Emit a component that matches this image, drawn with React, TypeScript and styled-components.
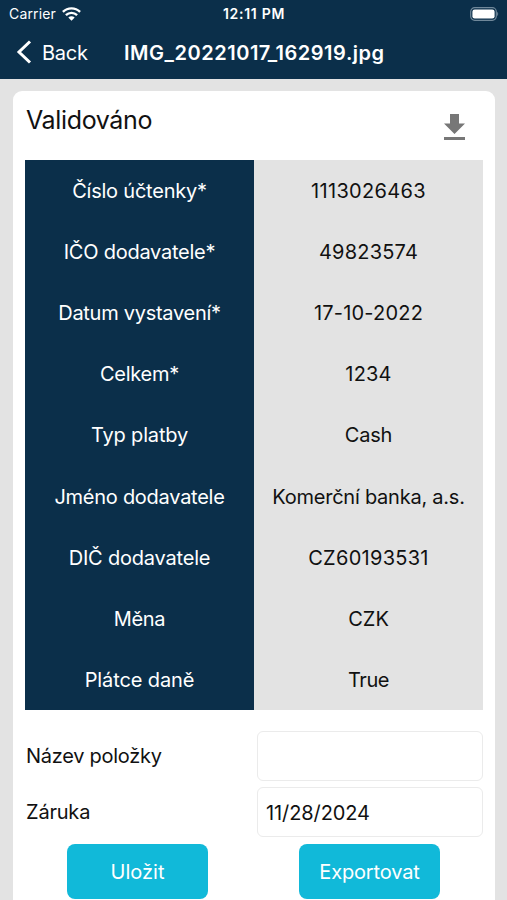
import React from "react";
import styled, { createGlobalStyle } from "styled-components";

const Global = createGlobalStyle`
  *{box-sizing:border-box}
  body{margin:0;background:#e3e3e3;font-family:Inter,"Liberation Sans",sans-serif;color:#111;overflow:hidden}
`;
const Screen = styled.main`width:507px;height:900px;overflow:hidden;background:#e3e3e3;`;
const Header = styled.header`height:79px;background:#0b2f4a;color:#fff;`;
const Status = styled.div`height:28px;display:grid;grid-template-columns:1fr auto 1fr;align-items:center;padding:0 8px 0 9px;`;
const Carrier = styled.div`display:flex;align-items:center;gap:6px;`;
const Battery = styled.div`display:flex;justify-content:flex-end;`;
const Nav = styled.nav`height:49px;display:flex;align-items:center;padding-left:16px;`;
const Back = styled.div`display:flex;align-items:center;gap:10px;width:108px;`;
const Card = styled.section`margin:12px 12px 0 13px;height:820px;border-radius:9px;background:#fff;padding:0 12px;`;
const CardHead = styled.div`height:69px;display:flex;justify-content:space-between;padding:13px 16px 0 1px;`;
const CardTitle = styled.div`padding-top:1px;`;
const Table = styled.div`height:550px;display:grid;grid-template-columns:229px 1fr;grid-template-rows:repeat(9,1fr);background:linear-gradient(90deg,#0b2f4a 229px,#e3e3e3 229px);`;
const Cell = styled.div<{ $light?: boolean }>`display:flex;align-items:center;justify-content:center;padding-top:1px;color:${p => (p.$light ? "#fff" : "#111")};`;
const Form = styled.div`padding-top:21px;display:grid;gap:6px;`;
const Field = styled.label`display:grid;grid-template-columns:231px 1fr;align-items:center;padding-left:1px;`;
const Input = styled.div`height:50px;border:1px solid #ebebeb;border-radius:6px;display:flex;align-items:center;padding:1px 0 0 8px;`;
const Actions = styled.div`display:flex;gap:91px;padding:7px 0 0 42px;`;
const Button = styled.button`width:141px;height:55px;border:0;border-radius:8px;background:#11b9d9;display:flex;align-items:center;justify-content:center;color:#fff;padding:0;font-family:inherit;`;
const Text = styled.span<{ $size?: number; $weight?: number; $track?: number }>`
  display:block;white-space:nowrap;line-height:1.2;
  font-size:${p => p.$size ?? 20}px;
  font-weight:${p => p.$weight ?? 400};
  letter-spacing:${p => p.$track ?? 0}px;
`;

type Row = { label: string; value: string; labelTrack: number; valueTrack: number };
const rows: Row[] = [
  { label: "Číslo účtenky*", value: "1113026463", labelTrack: -0.22, valueTrack: 0.33 },
  { label: "IČO dodavatele*", value: "49823574", labelTrack: -0.25, valueTrack: 0.2 },
  { label: "Datum vystavení*", value: "17-10-2022", labelTrack: -0.28, valueTrack: 0.2 },
  { label: "Celkem*", value: "1234", labelTrack: -0.25, valueTrack: 0.2 },
  { label: "Typ platby", value: "Cash", labelTrack: -0.15, valueTrack: -0.2 },
  { label: "Jméno dodavatele", value: "Komerční banka, a.s.", labelTrack: -0.26, valueTrack: -0.24 },
  { label: "DIČ dodavatele", value: "CZ60193531", labelTrack: -0.2, valueTrack: 0.28 },
  { label: "Měna", value: "CZK", labelTrack: -0.3, valueTrack: 0 },
  { label: "Plátce daně", value: "True", labelTrack: -0.12, valueTrack: -0.5 },
];

const WifiIcon = () => (
  <svg width="19" height="14" viewBox="0 0 19 14" fill="none" stroke="#fff" strokeWidth="2.4">
    <path d="M.9 4.9C5.8.2 13.2.2 18.1 4.9M3.9 8.2c3.2-3.1 8-3.1 11.2 0" />
    <path d="M6.3 10.6c1.9-1.7 4.5-1.7 6.4 0L9.5 13.8z" fill="#fff" stroke="none" />
  </svg>
);
const BatteryIcon = () => (
  <svg width="29" height="14" viewBox="0 0 29 14">
    <rect x=".7" y=".7" width="25.6" height="12.6" rx="4" fill="none" stroke="#70889a" strokeWidth="1.2" />
    <rect x="2.4" y="2.4" width="22.2" height="9.2" rx="2.3" fill="#fff" />
    <path d="M27.2 4.8q2 2.2 0 4.4z" fill="#70889a" />
  </svg>
);
const BackIcon = () => (
  <svg width="16" height="25" viewBox="0 0 16 25">
    <path d="M14 1.5 3 12 14 22.5" fill="none" stroke="#fff" strokeWidth="3" />
  </svg>
);
const DownloadIcon = () => (
  <svg width="24" height="44" viewBox="0 0 24 44">
    <path d="M7 10h9v9.5h6L11.5 30 1 19.5h6zM1 33h21v3H1z" fill="#777" />
  </svg>
);

export default function App() {
  return (
    <Screen>
      <Global />
      <Header>
        <Status>
          <Carrier><Text $size={14} $track={0.16}>Carrier</Text><WifiIcon /></Carrier>
          <Text $size={14} $weight={600} $track={0.72}>12:11 PM</Text>
          <Battery><BatteryIcon /></Battery>
        </Status>
        <Nav>
          <Back><BackIcon /><Text $track={-0.25}>Back</Text></Back>
          <Text $weight={600} $track={0.53}>IMG_20221017_162919.jpg</Text>
        </Nav>
      </Header>
      <Card>
        <CardHead>
          <CardTitle><Text $size={25} $track={-0.36}>Validováno</Text></CardTitle>
          <DownloadIcon />
        </CardHead>
        <Table>
          {rows.map(r => (
            <React.Fragment key={r.label}>
              <Cell $light><Text $track={r.labelTrack}>{r.label}</Text></Cell>
              <Cell><Text $track={r.valueTrack}>{r.value}</Text></Cell>
            </React.Fragment>
          ))}
        </Table>
        <Form>
          <Field><Text $track={-0.28}>Název položky</Text><Input /></Field>
          <Field><Text $track={-0.2}>Záruka</Text><Input><Text $track={-0.1}>11/28/2024</Text></Input></Field>
        </Form>
        <Actions>
          <Button><Text>Uložit</Text></Button>
          <Button><Text $track={-0.15}>Exportovat</Text></Button>
        </Actions>
      </Card>
    </Screen>
  );
}
